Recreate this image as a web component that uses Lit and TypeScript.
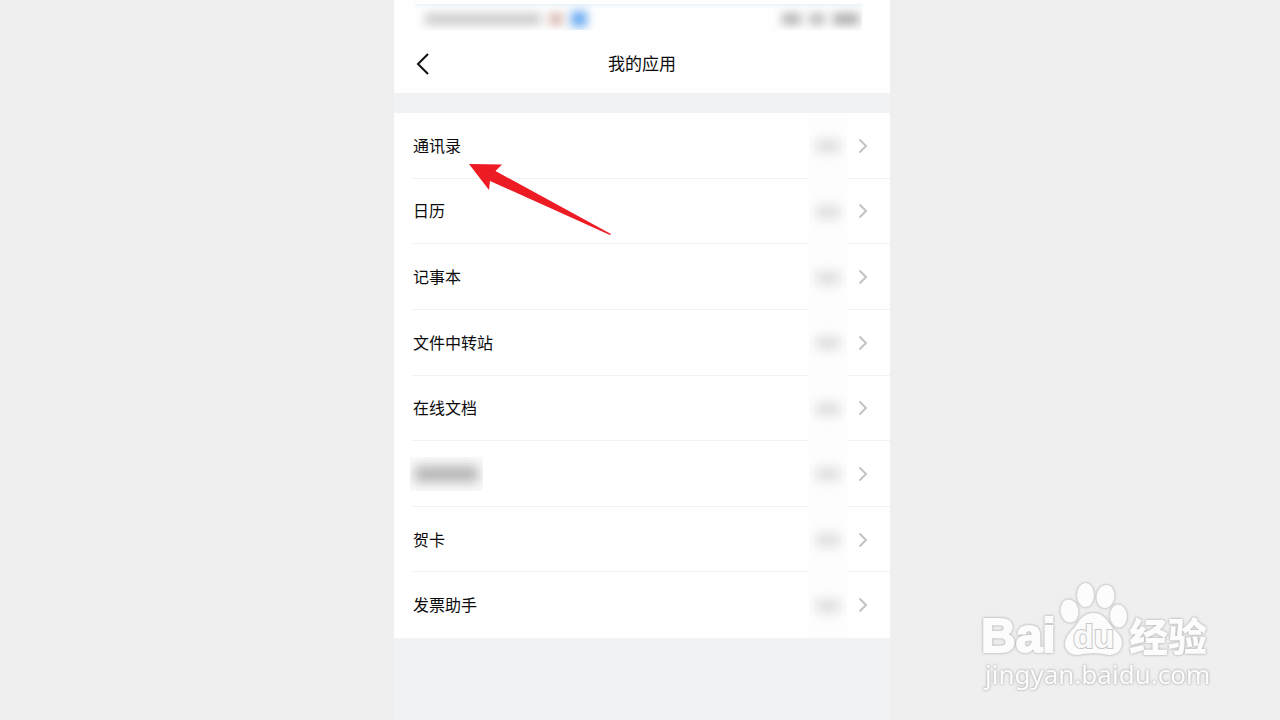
import { LitElement, html, css } from "lit";
import { customElement, property } from "lit/decorators.js";

const FONT = css`"Noto Sans CJK SC", "Noto Sans", sans-serif`;

interface AppEntry {
  name: string;
  hidden?: boolean;
}

const APPS: AppEntry[] = [
  { name: "通讯录" },
  { name: "日历" },
  { name: "记事本" },
  { name: "文件中转站" },
  { name: "在线文档" },
  { name: "", hidden: true },
  { name: "贺卡" },
  { name: "发票助手" },
];

/** One tappable line of the application list. */
@customElement("app-row")
export class AppRow extends LitElement {
  @property({ attribute: false }) entry: AppEntry = { name: "" };

  static styles = css`
    :host {
      display: grid;
    }
    .row {
      display: flex;
      align-items: stretch;
      padding: 0 0 0 19px;
      border: 0;
      background: none;
      font: 400 16px/24px ${FONT};
      color: #0c0c0c;
      text-align: left;
      cursor: pointer;
    }
    .name {
      flex: 1;
      align-self: center;
      padding-bottom: 2px;
    }
    .masked {
      flex: none;
      align-self: center;
      box-sizing: border-box;
      width: 73px;
      height: 34px;
      margin: 0 auto 0 -3px;
      padding: 9px 5px;
      overflow: hidden;
      background: #fafafa;
    }
    .masked::before {
      content: "";
      display: block;
      height: 16px;
      background: #b4b4b4;
      filter: blur(6px);
    }
    .state {
      display: grid;
      place-items: center;
      width: 38px;
      margin-bottom: -1px;
      overflow: hidden;
      background: #fdfdfd;
      z-index: 1;
    }
    .state::before {
      content: "";
      width: 26px;
      height: 12px;
      border-radius: 6px;
      background: #dadada;
      filter: blur(6px);
    }
    .chevron {
      align-self: center;
      width: 10px;
      height: 16px;
      margin: 0 22px 0 11px;
      fill: none;
      stroke: #c3c3c5;
      stroke-width: 2;
    }
  `;

  render() {
    return html`
      <button class="row" type="button" aria-label=${this.entry.name || "应用"}>
        <span class=${this.entry.hidden ? "masked" : "name"}>${this.entry.name}</span>
        <span class="state"></span>
        <svg class="chevron" viewBox="0 0 10 16" aria-hidden="true">
          <path d="M1.500 1.500 8 8 1.500 14.500" />
        </svg>
      </button>
    `;
  }
}

@customElement("site-mark")
export class SiteMark extends LitElement {
  static styles = css`
    :host {
      display: block;
    }
    svg {
      display: block;
      width: 240px;
      height: 120px;
    }
    .mark {
      filter: drop-shadow(0 0 1px #b4b4b4) drop-shadow(0 0 1px #d0d0d0);
    }
    .ink {
      fill: #fcfcfc;
    }
    .latin {
      font: 700 48px "Liberation Sans", sans-serif;
      stroke: #fcfcfc;
      stroke-width: 2;
    }
    .han {
      font: 900 39px "Noto Sans CJK SC", sans-serif;
    }
    .url {
      font: 400 26px "Noto Sans", sans-serif;
    }
    .du {
      font: 700 34px "Liberation Sans", sans-serif;
      fill: #fafafa;
      stroke: #c8c8c8;
      stroke-width: 2;
      paint-order: stroke;
    }
  `;

  render() {
    return html`
      <svg viewBox="0 0 240 120">
        <g class="mark">
          <text class="ink latin" x="6" y="74">Bai</text>
          <g class="ink">
            <ellipse cx="94.500" cy="33" rx="9" ry="11.500" transform="rotate(-8 94.500 33)" />
            <ellipse cx="110.500" cy="17" rx="8.500" ry="12" />
            <ellipse cx="130.500" cy="18.500" rx="9" ry="11.500" transform="rotate(8 130.500 18.500)" />
            <ellipse cx="143.500" cy="38" rx="8.500" ry="11.500" transform="rotate(-4 143.500 38)" />
            <path d="M118.500 35C126 35 130 39 134 45C138 52 147 56 147 65C147 75 137 79 129 76C121 75 115 75 108 76C99 79 90 75 90 66C90 58 97 53 102 46C106 39 111 35 118.500 35Z" />
          </g>
          <text class="ink han" x="154" y="73">经验</text>
          <text class="ink url" x="10" y="106">jingyan.baidu.com</text>
        </g>
        <text class="du" x="98" y="70">du</text>
      </svg>
    `;
  }
}

@customElement("app-root")
export class AppRoot extends LitElement {
  static styles = css`
    :host {
      display: block;
      position: relative;
      min-height: 100vh;
      overflow: hidden;
      background: #efefef;
      font-family: ${FONT};
    }
    .stage {
      display: grid;
      grid-template-columns: 394fr minmax(320px, 496fr) 390fr;
      min-height: 100vh;
    }
    .phone {
      grid-column: 2;
      position: relative;
      display: flex;
      flex-direction: column;
      gap: 20px;
      background: #f1f2f4;
    }
    .top {
      background: #fefefe;
    }
    .status {
      display: flex;
      align-items: center;
      gap: 8px;
      box-sizing: border-box;
      height: 26px;
      margin: 4px 28px 4px 21px;
      padding: 4px 3px 0 10px;
      overflow: hidden;
      background: linear-gradient(#eaf5fb, #fefefe 4px);
    }
    .smudge {
      height: 12px;
      background: #cecece;
      filter: blur(5px);
    }
    .clock {
      width: 116px;
    }
    .dot {
      width: 14px;
      background: #d8b8b0;
    }
    .blue {
      width: 16px;
      height: 16px;
      background: #6fadf2;
    }
    .signal {
      width: 19px;
      margin-left: auto;
      background: #b8b8b8;
    }
    .wifi {
      width: 16px;
      background: #c0c0c0;
    }
    .battery {
      width: 26px;
      background: #b0b0b0;
    }
    .bar {
      display: grid;
      grid-template-columns: 40px 1fr 40px;
      align-items: center;
      height: 59px;
      padding: 0 16px;
    }
    .back {
      display: grid;
      place-items: center start;
      height: 40px;
      padding: 0 6px;
      border: 0;
      background: none;
      cursor: pointer;
    }
    .back svg {
      width: 14px;
      height: 22px;
      fill: none;
      stroke: #111;
      stroke-width: 2;
    }
    .title {
      margin: 0;
      padding-bottom: 2px;
      font-size: 17px;
      line-height: 26px;
      font-weight: 400;
      text-align: center;
      color: #0c0c0c;
    }
    .list {
      display: grid;
      grid-auto-rows: 1fr;
      min-height: 525px;
      margin: 0;
      padding: 0;
      overflow: hidden;
      list-style: none;
      background: #fff;
    }
    .item {
      display: grid;
      background: linear-gradient(#f2f2f2, #f2f2f2) 18px 100% / 100% 1px no-repeat;
    }
    .item:last-child {
      background: none;
    }
    .pointer {
      position: absolute;
      left: 75px;
      top: 163px;
      width: 144px;
      height: 74px;
      fill: #ed1c24;
      pointer-events: none;
    }
    .mark {
      position: absolute;
      right: 65px;
      bottom: 22px;
      pointer-events: none;
    }
  `;

  render() {
    return html`
      <div class="stage">
        <main class="phone">
          <header class="top">
            <div class="status" aria-hidden="true">
              <span class="smudge clock"></span>
              <span class="smudge dot"></span>
              <span class="smudge blue"></span>
              <span class="smudge signal"></span>
              <span class="smudge wifi"></span>
              <span class="smudge battery"></span>
            </div>
            <div class="bar">
              <button class="back" type="button" aria-label="返回">
                <svg viewBox="0 0 14 22" aria-hidden="true">
                  <path d="M12 1 2 11 12 21" />
                </svg>
              </button>
              <h1 class="title">我的应用</h1>
            </div>
          </header>
          <ul class="list">
            ${APPS.map((entry) => html`<li class="item"><app-row .entry=${entry}></app-row></li>`)}
          </ul>
          <svg class="pointer" viewBox="0 0 144 74" aria-hidden="true">
            <path d="M0 1 33 1.500 26.500 8 142 71 141 72 21 18 20 27Z" />
          </svg>
        </main>
      </div>
      <site-mark class="mark"></site-mark>
    `;
  }
}
